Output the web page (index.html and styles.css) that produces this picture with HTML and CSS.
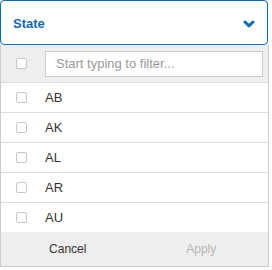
FILE: index.html
```html
<!DOCTYPE html>
<html lang="en">
<head>
  <meta charset="UTF-8">
  <title>State filter</title>
  <link rel="stylesheet" href="styles.css">
</head>
<body>
<div class="select">
  <button class="select-btn" type="button">
    <span class="select-label">State</span>
    <svg class="select-caret" width="12" height="8" viewBox="0 0 12 8"><path d="M2 2 L6 5.8 L10 2" fill="none" stroke="#0d6bb8" stroke-width="3" stroke-linecap="round" stroke-linejoin="round"/></svg>
  </button>
  <div class="panel">
    <div class="filter-row">
      <span class="check"></span>
      <input class="filter-input" type="text" placeholder="Start typing to filter...">
    </div>
    <ul class="options">
      <li class="option"><span class="check"></span>AB</li>
      <li class="option"><span class="check"></span>AK</li>
      <li class="option"><span class="check"></span>AL</li>
      <li class="option"><span class="check"></span>AR</li>
      <li class="option"><span class="check"></span>AU</li>
    </ul>
    <div class="panel-foot">
      <button class="foot-btn" type="button">Cancel</button>
      <button class="foot-btn is-disabled" type="button">Apply</button>
    </div>
  </div>
</div>
</body>
</html>
```
FILE: styles.css
```css
body {
  margin: 0;
  font-family: "Liberation Sans", Arial, sans-serif;
  font-size: 13px;
  color: #333;
  background: #fff;
}
.select {
  width: 269px;
}
.select-btn {
  width: 268px;
  height: 45px;
  box-sizing: border-box;
  display: flex;
  align-items: center;
  justify-content: space-between;
  padding: 0 12px 0 12px;
  background: #fff;
  border: 1px solid #0d6bb8;
  border-radius: 4px;
  font: inherit;
  cursor: pointer;
}
.select-label {
  color: #0d6bb8;
  font-weight: bold;
  font-size: 13px;
  margin-top: 2px;
}
.select-caret {
  margin-right: 0;
  margin-top: 2px;
}
.panel {
  border: 1px solid #ccc;
  border-top: 0;
  background: #fff;
}
.filter-row {
  height: 37px;
  display: flex;
  align-items: center;
  background: #eee;
  padding-left: 15px;
  padding-right: 5px;
  border-bottom: 1px solid #ddd;
}
.check {
  width: 11px;
  height: 11px;
  box-sizing: border-box;
  border: 1px solid #c8c8c8;
  border-radius: 2px;
  background: #fff;
  flex: none;
}
.filter-input {
  margin-left: 18px;
  width: 218px;
  height: 26px;
  box-sizing: border-box;
  border: 1px solid #ccc;
  background: #fff;
  padding: 0 10px;
  font: inherit;
  font-size: 13px;
  outline: 0;
}
.filter-input::placeholder {
  color: #999;
}
.options {
  list-style: none;
  margin: 0;
  padding: 0;
}
.option {
  height: 29px;
  display: flex;
  align-items: center;
  padding-left: 15px;
  border-bottom: 1px solid #ddd;
  color: #333;
}
.option:last-child {
  border-bottom: 0;
}
.option .check {
  margin-right: 18px;
}
.panel-foot {
  height: 34px;
  display: flex;
  background: #eee;
}
.foot-btn {
  flex: 1;
  background: none;
  border: 0;
  font: inherit;
  font-size: 12px;
  color: #333;
  cursor: pointer;
}
.foot-btn.is-disabled {
  color: #b5b5b5;
  cursor: default;
}
```
